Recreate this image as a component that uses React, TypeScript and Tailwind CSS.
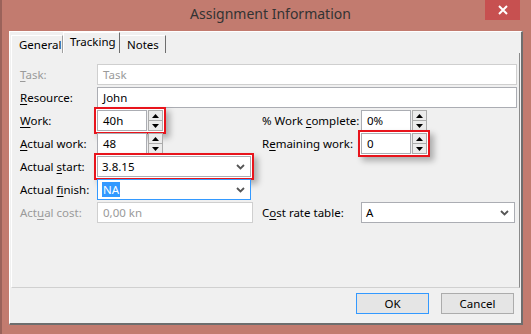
import React from "react";

const Label = ({
  pre = "",
  k,
  post = "",
  disabled,
}: {
  pre?: string;
  k: string;
  post?: string;
  disabled?: boolean;
}) => (
  <span className={`whitespace-nowrap ${disabled ? "text-[#9a9a9a]" : "text-black"}`}>
    {pre}
    <span className="underline underline-offset-2">{k}</span>
    {post}
  </span>
);

const Chevron = () => (
  <svg width="9" height="6" viewBox="0 0 9 6" className="shrink-0">
    <path d="M1 1 L4.5 4.5 L8 1" fill="none" stroke="#555" strokeWidth="1.8" />
  </svg>
);

const Spinner = () => (
  <div className="flex flex-col w-[15px] h-[21px] ml-px shrink-0">
    <div className="flex-1 flex items-center justify-center border border-[#acacac] bg-[#ececec]">
      <svg width="7" height="4" viewBox="0 0 7 4">
        <path d="M3.5 0 L7 4 L0 4 Z" fill="#000" />
      </svg>
    </div>
    <div className="flex-1 flex items-center justify-center border border-t-0 border-[#acacac] bg-[#ececec]">
      <svg width="7" height="4" viewBox="0 0 7 4">
        <path d="M0 0 L7 0 L3.5 4 Z" fill="#000" />
      </svg>
    </div>
  </div>
);

const TextBox = ({
  value,
  w,
  disabled,
}: {
  value: string;
  w: string;
  disabled?: boolean;
}) => (
  <div
    className={`${w} shrink-0 h-[21px] flex items-center px-[5px] bg-white border ${
      disabled ? "border-[#cfcfcf] text-[#9a9a9a]" : "border-[#abadb3] text-black"
    }`}
  >
    {value}
  </div>
);

const Combo = ({ children, focus }: { children: React.ReactNode; focus?: boolean }) => (
  <div
    className={`w-[154px] shrink-0 h-[21px] flex items-center justify-between pl-[4px] pr-[5px] bg-white border ${
      focus ? "border-[#3399ff]" : "border-[#abadb3]"
    }`}
  >
    <div className="flex items-center">{children}</div>
    <Chevron />
  </div>
);

const mark =
  "shadow-[0_0_0_1px_#ffffff,0_0_0_3px_#e8141c,4px_4px_6px_3px_rgba(0,0,0,0.28)]";

const Row = ({
  children,
  right,
}: {
  children: React.ReactNode;
  right?: React.ReactNode;
}) => (
  <div className="flex items-center h-[21px]">
    <div className={`flex items-center shrink-0 ${right ? "w-[242px]" : ""}`}>{children}</div>
    {right && <div className="flex items-center">{right}</div>}
  </div>
);

const LeftLabel = ({ children }: { children: React.ReactNode }) => (
  <div className="w-[77px] shrink-0">{children}</div>
);

const RightLabel = ({ children }: { children: React.ReactNode }) => (
  <div className="w-[99px] shrink-0">{children}</div>
);

export default function App() {
  return (
    <div className="w-[531px] h-[334px] overflow-hidden bg-[#c27b6f] font-['Noto_Sans',sans-serif] text-[11.5px] leading-none border-l-2 border-[#9a625a]">
      {/* title bar */}
      <div className="grid grid-cols-[1fr_auto_1fr] h-[31px]">
        <div />
        <div className="text-[14px] text-[#333] pt-[7px] pl-[8px]">Assignment Information</div>
        <div className="flex justify-end pr-[11px]">
          <div className="w-[35px] h-[20px] bg-[#c75050] flex items-center justify-center">
            <svg width="10" height="10" viewBox="0 0 10 10">
              <path d="M1 1 L9 9 M9 1 L1 9" stroke="#fff" strokeWidth="2" />
            </svg>
          </div>
        </div>
      </div>

      {/* client area */}
      <div className="ml-[7px] mr-[8px] h-[294px] bg-[#f0f0f0] border-l border-t border-white border-r-2 border-b-2 border-r-[#6e6e6e] border-b-[#6e6e6e] flex flex-col">
        {/* tabs */}
        <div className="flex items-end h-[21px] pl-px">
          <div className="h-[18px] w-[52px] flex items-center pl-[7px] border-t border-l border-white border-r border-r-[#a0a0a0] bg-[#f0f0f0]">
            General
          </div>
          <div className="h-[21px] w-[57px] flex items-center pl-[6px] pb-[3px] border-t border-l border-white border-r border-r-[#6e6e6e] bg-[#f0f0f0]">
            Tracking
          </div>
          <div className="h-[18px] w-[46px] flex items-center pl-[7px] border-t border-white border-r border-r-[#6e6e6e] bg-[#f0f0f0]">
            Notes
          </div>
        </div>

        {/* tab panel */}
        <div className="mx-px h-[235px] border-l border-white border-r border-r-[#8a8a8a] border-b border-b-[#d0d0d0] pt-[11px] pl-[8px] flex flex-col gap-[2px]">
          <Row>
            <LeftLabel>
              <Label k="T" post="ask:" disabled />
            </LeftLabel>
            <TextBox value="Task" w="w-[420px]" disabled />
          </Row>
          <Row>
            <LeftLabel>
              <Label k="R" post="esource:" />
            </LeftLabel>
            <TextBox value="John" w="w-[420px]" />
          </Row>
          <Row
            right={
              <>
                <RightLabel>
                  <Label pre="% Work " k="c" post="omplete:" />
                </RightLabel>
                <TextBox value="0%" w="w-[50px]" />
                <Spinner />
              </>
            }
          >
            <LeftLabel>
              <Label k="W" post="ork:" />
            </LeftLabel>
            <div className={`flex ${mark}`}>
              <TextBox value="40h" w="w-[50px]" />
              <Spinner />
            </div>
          </Row>
          <Row
            right={
              <>
                <RightLabel>
                  <Label pre="R" k="e" post="maining work:" />
                </RightLabel>
                <div className={`flex ${mark}`}>
                  <TextBox value="0" w="w-[50px]" />
                  <Spinner />
                </div>
              </>
            }
          >
            <LeftLabel>
              <Label k="A" post="ctual work:" />
            </LeftLabel>
            <TextBox value="48" w="w-[50px]" />
            <Spinner />
          </Row>
          <Row>
            <LeftLabel>
              <Label pre="Actual " k="s" post="tart:" />
            </LeftLabel>
            <div className={mark}>
              <Combo>3.8.15</Combo>
            </div>
          </Row>
          <Row>
            <LeftLabel>
              <Label pre="Actual " k="f" post="inish:" />
            </LeftLabel>
            <Combo focus>
              <span className="bg-[#3399ff] text-white px-px py-[2px]">NA</span>
            </Combo>
          </Row>
          <Row
            right={
              <>
                <RightLabel>
                  <Label pre="C" k="o" post="st rate table:" />
                </RightLabel>
                <Combo>A</Combo>
              </>
            }
          >
            <LeftLabel>
              <Label pre="Act" k="u" post="al cost:" disabled />
            </LeftLabel>
            <TextBox value="0,00 kn" w="w-[156px]" disabled />
          </Row>
        </div>

        {/* buttons */}
        <div className="flex justify-end gap-[12px] pr-[7px] pt-[5px]">
          <div className="w-[73px] h-[21px] flex items-center justify-center bg-[#e5e5e5] border border-[#3399ff]">
            OK
          </div>
          <div className="w-[73px] h-[21px] flex items-center justify-center bg-[#e5e5e5] border border-[#acacac]">
            Cancel
          </div>
        </div>
      </div>
    </div>
  );
}
